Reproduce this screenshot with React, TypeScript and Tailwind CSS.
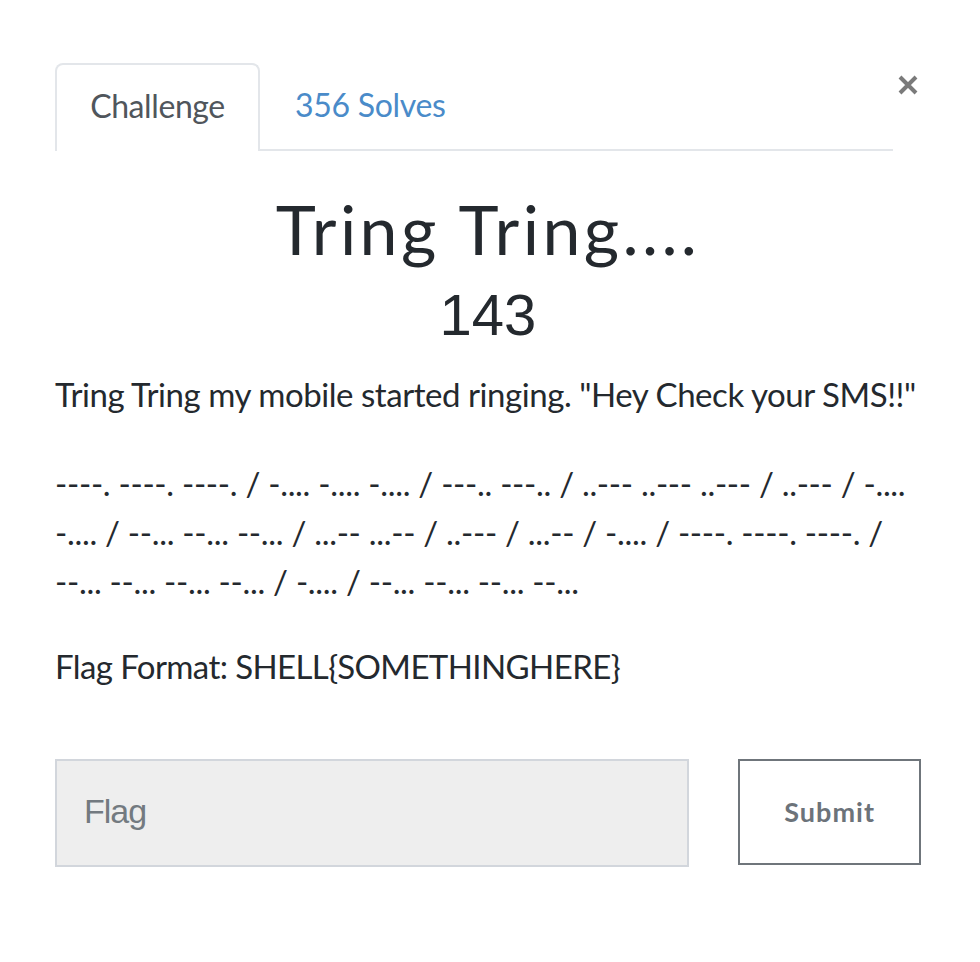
const MORSE_LINES = [
  '----. ----. ----. / -.... -.... -.... / ---.. ---.. / ..--- ..--- ..--- / ..--- / -....',
  '-.... / --... --... --... / ...-- ...-- / ..--- / ...-- / -.... / ----. ----. ----. /',
  '--... --... --... --... / -.... / --... --... --... --...',
]

export default function App() {
  return (
    <div className="w-[980px] h-[962px] bg-white relative" style={{ fontFamily: 'Lato, "Liberation Sans", sans-serif' }}>
      {/* Close */}
      <button type="button" className="absolute left-[893px] top-[68px] w-[30px] h-[34px] flex items-center justify-center text-[#7a7a7a]">
        <svg width="22" height="22" viewBox="0 0 22 22">
          <path d="M3 3 L19 19 M19 3 L3 19" stroke="currentColor" strokeWidth="4" />
        </svg>
      </button>

      <div className="pl-[55px] pr-[59px] pt-[63px]">
        {/* Tabs */}
        <div className="flex w-[838px] border-b-2 border-[#e3e6ea]">
          <div className="w-[205px] h-[88px] -mb-[2px] bg-white border-2 border-b-0 border-[#e3e6ea] rounded-t-[8px] flex items-center justify-center pb-[4px] text-[32px] tracking-[-0.4px] text-[#50565c]">
            Challenge
          </div>
          <div className="h-[86px] pl-[35px] pb-[2px] flex items-center text-[32px] tracking-[-0.3px] text-[#4a8bc9]">356 Solves</div>
        </div>

        {/* Title */}
        <div className="text-center mt-[36px]">
          <div className="text-[68px] leading-[84px] font-normal text-[#24292e] tracking-[3.4px]">Tring Tring....</div>
          <div className="mt-[10px] text-[58px] leading-[68px] text-[#24292e]" style={{ fontFamily: '"Liberation Sans", sans-serif' }}>
            143
          </div>
        </div>

        {/* Description */}
        <div className="mt-[21px] w-[880px] text-[33px] text-[#24292e] leading-[49px]">
          <p className="tracking-[-0.45px]">Tring Tring my mobile started ringing. "Hey Check your SMS!!"</p>
          <p className="mt-[40px] tracking-[-0.3px]">
            {MORSE_LINES.map((line, i) => (
              <span key={i} className="block whitespace-nowrap">
                {line}
              </span>
            ))}
          </p>
          <p className="mt-[36px] tracking-[-0.6px]">Flag Format: SHELL{'{'}SOMETHINGHERE{'}'}</p>
        </div>

        {/* Form */}
        <div className="flex mt-[68px] items-start">
          <div
            className="w-[635px] h-[108px] bg-[#eeeeee] border-2 border-[#d2d6dc] flex items-center pl-[27px] pb-[4px] text-[34px] tracking-[-1px] text-[#737a80]"
            style={{ fontFamily: '"Liberation Sans", sans-serif' }}
          >
            Flag
          </div>
          <button
            type="button"
            className="ml-[49px] w-[183px] h-[106px] border-2 border-[#6f757b] bg-white flex items-center justify-center text-[27px] font-bold tracking-[1px] text-[#6c737a]"
          >
            Submit
          </button>
        </div>
      </div>
    </div>
  )
}
